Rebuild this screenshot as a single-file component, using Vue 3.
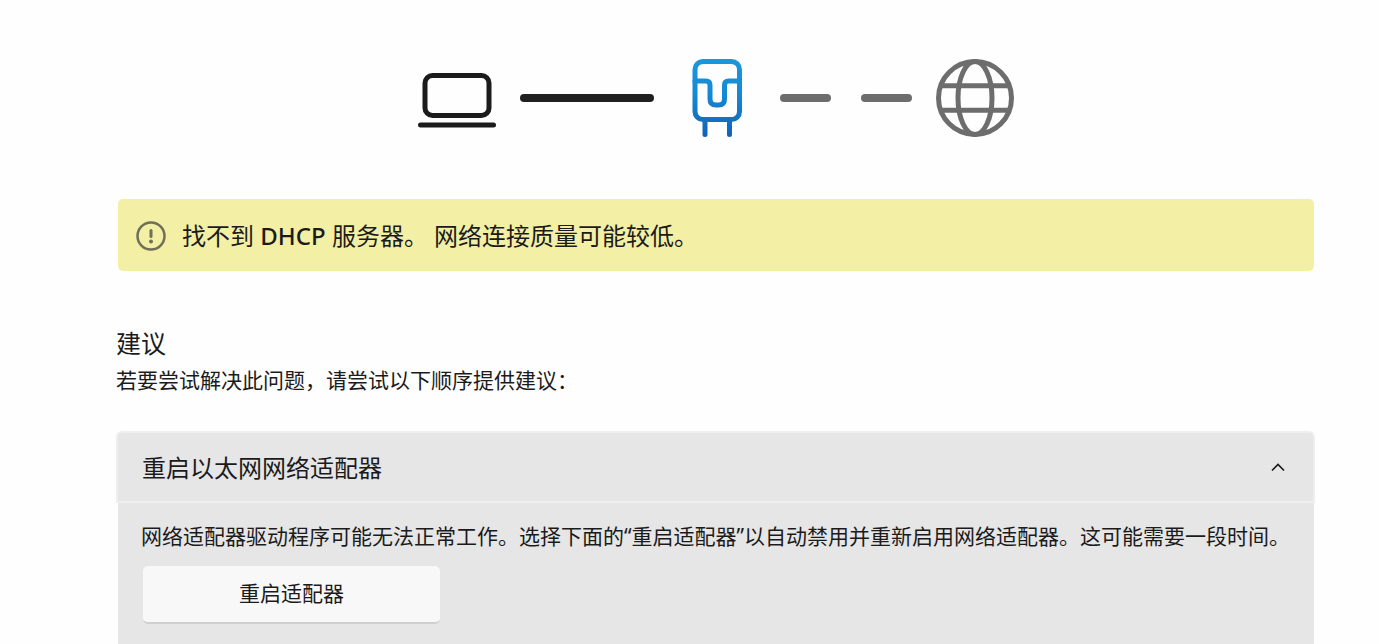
<script setup>
import { ref } from 'vue'

const expanded = ref(true)
</script>

<template>
  <main class="page">
    <section class="diagram" aria-label="网络连接">
      <svg class="node" viewBox="0 0 78 78" fill="none" stroke="#1b1b1b" stroke-width="5" stroke-linecap="round">
        <rect x="7" y="16.5" width="64" height="40" rx="7.5" />
        <path d="M2.5 66H75.5" />
      </svg>
      <span class="link solid"></span>
      <svg class="node" viewBox="0 0 78 78" fill="none" stroke="url(#adapter-blue)" stroke-width="5" stroke-linecap="round" stroke-linejoin="round">
        <defs>
          <linearGradient id="adapter-blue" gradientUnits="userSpaceOnUse" x1="0" y1="0" x2="0" y2="78">
            <stop offset="0" stop-color="#1a98dc" />
            <stop offset="0.45" stop-color="#1589d5" />
            <stop offset="1" stop-color="#0f62b8" />
          </linearGradient>
        </defs>
        <rect x="17" y="2.5" width="44.5" height="58" rx="8" />
        <path d="M17 22H28Q32 22 32 26V40Q32 46 38 46H40.5Q46.5 46 46.5 40V26Q46.5 22 50.5 22H61.5" />
        <path d="M27 61V75.5M51.5 61V75.5" />
      </svg>
      <span class="link dashed"><i></i><i></i></span>
      <svg class="node" viewBox="0 0 78 78" fill="none" stroke="#6d6d6d" stroke-width="5">
        <circle cx="39" cy="39" r="36.5" />
        <ellipse cx="39" cy="39" rx="17" ry="36.5" />
        <path d="M5 26.7H73M5 51.3H73" />
      </svg>
    </section>

    <section class="banner" role="alert">
      <svg class="warn" viewBox="0 0 30 30" fill="none" stroke="#706f58" stroke-linecap="round">
        <circle cx="15" cy="15" r="13.5" stroke-width="2.5" />
        <path d="M15 9.5V15.5" stroke-width="3" />
        <circle cx="15" cy="20.5" r="2" fill="#706f58" stroke="none" />
      </svg>
      <p>找不到 <span class="latin">DHCP</span> 服务器。 网络连接质量可能较低。</p>
    </section>

    <section class="advice">
      <h1>建议</h1>
      <p>若要尝试解决此问题，请尝试以下顺序提供建议：</p>
    </section>

    <section class="card">
      <button class="card-head" type="button" :aria-expanded="expanded" aria-controls="restart-panel" @click="expanded = !expanded">
        <span>重启以太网网络适配器</span>
        <svg class="chevron" :class="{ closed: !expanded }" viewBox="0 0 14 14" fill="none" stroke="#1b1b1b" stroke-width="1.7">
          <path d="M1 9.5L7 3.5L13 9.5" />
        </svg>
      </button>
      <div v-show="expanded" id="restart-panel" class="card-body">
        <p>网络适配器驱动程序可能无法正常工作。选择下面的“重启适配器”以自动禁用并重新启用网络适配器。这可能需要一段时间。</p>
        <button class="action" type="button">重启适配器</button>
      </div>
    </section>
  </main>
</template>

<style>
body {
  margin: 0;
  background: #fefefe;
}
</style>

<style scoped>
.page {
  box-sizing: border-box;
  min-height: 100vh;
  display: flex;
  flex-direction: column;
  padding: 59px 64px 0 116px;
  color: #1b1b1b;
  font-family: "Noto Sans", "Noto Sans CJK SC", sans-serif;
  font-size: 21px;
  line-height: 32px;
}

h1,
p {
  margin: 0;
  font-weight: 400;
}

.diagram {
  display: flex;
  justify-content: center;
  align-items: center;
  gap: 24px;
}

.node {
  width: 78px;
  height: 78px;
}

.link {
  height: 8px;
}

.solid {
  width: 134px;
  border-radius: 4px;
  background: #202020;
}

.dashed {
  width: 132px;
  display: flex;
  gap: 30px;
}

.dashed i {
  flex: 1;
  border-radius: 4px;
  background: #6d6d6d;
}

.banner {
  display: flex;
  align-items: center;
  gap: 16px;
  margin: 62px 1px 0 2px;
  padding: 19px 18px 17px;
  border-radius: 5px;
  background: #f3efa5;
  font-size: 24px;
  line-height: 36px;
}

.latin {
  font-weight: 500;
}

.warn {
  flex: none;
  width: 30px;
  height: 30px;
}

.advice {
  margin-top: 53px;
}

.advice h1 {
  margin-bottom: 2px;
  font-size: 25px;
  line-height: 38px;
}

.card {
  flex: 1;
  display: flex;
  flex-direction: column;
  margin-top: 35px;
}

.card-head {
  display: flex;
  align-items: center;
  justify-content: space-between;
  padding: 17px 28px 15px 24px;
  border: 2px solid #efefef;
  border-radius: 6px 6px 0 0;
  background: #e6e6e6;
  color: inherit;
  font-family: inherit;
  font-size: 24px;
  line-height: 36px;
}

.chevron {
  width: 14px;
  height: 14px;
}

.closed {
  transform: rotate(180deg);
}

.card-body {
  flex: 1;
  margin: 0 1px 0 2px;
  padding: 17px 23px 21px;
  background: #e6e6e6;
}

.action {
  display: block;
  width: 297px;
  margin: 14px 2px 0;
  padding: 11px 12px 13px;
  border: 0;
  border-bottom: 2px solid #cfcfcf;
  border-radius: 5px;
  background: #f8f8f8;
  color: inherit;
  font-family: inherit;
  font-size: 21px;
  line-height: 32px;
}
</style>
